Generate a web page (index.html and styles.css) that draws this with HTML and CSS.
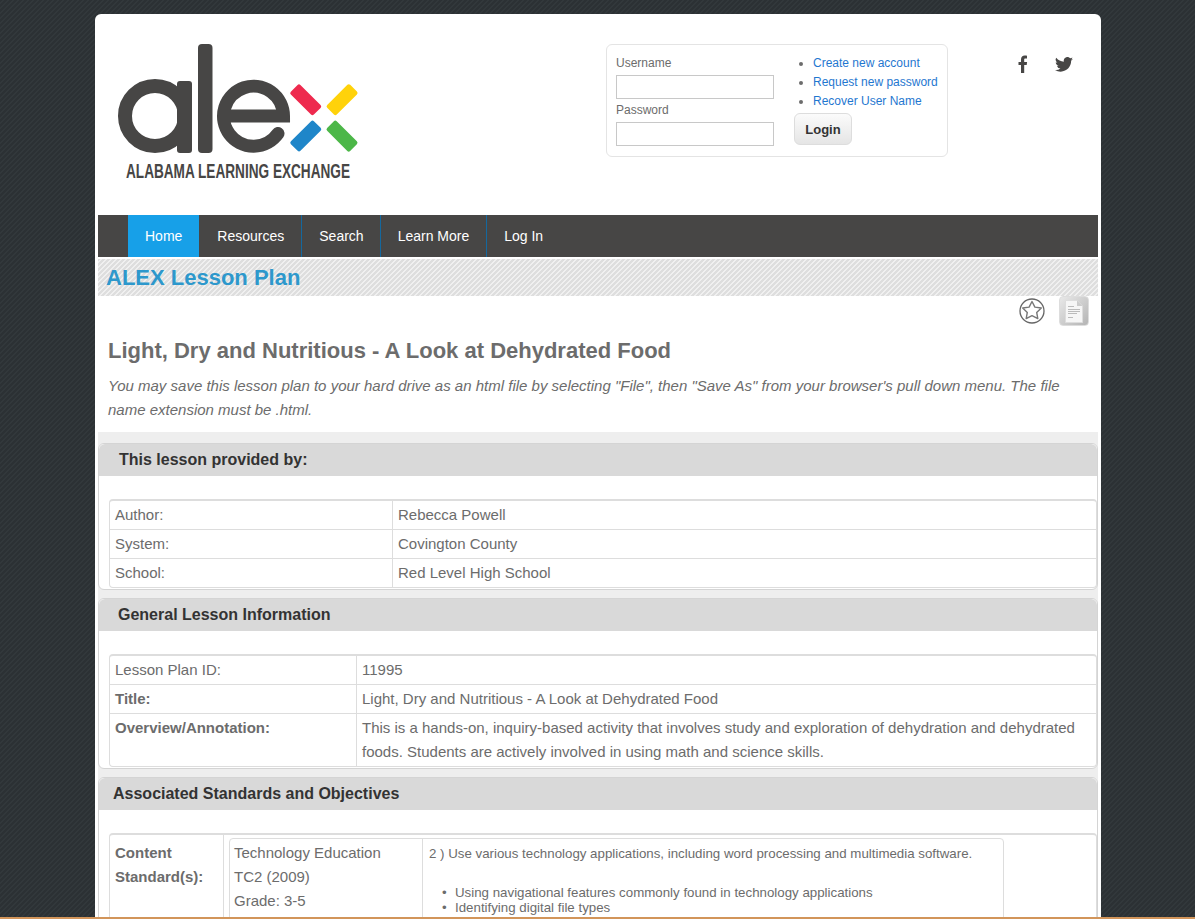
FILE: index.html
```html
<!DOCTYPE html>
<html lang="en">
<head>
    <meta charset="UTF-8">
    <title>ALEX Lesson Plan</title>
    <link rel="stylesheet" href="styles.css">
</head>
<body>
    <div class="wrapper">
        <div class="header">
            <svg class="logo" width="260" height="150" viewBox="110 40 260 150" role="img" aria-label="alex">
                <circle class="logo-ink" cx="155" cy="116" r="30" fill="none" stroke-width="14"/>
                <rect class="logo-fill" x="177" y="81" width="15" height="72" rx="3"/>
                <rect class="logo-fill" x="198" y="44" width="14.5" height="109" rx="4"/>
                <path class="logo-ink" d="M278 133.5A30 30 0 1 1 283.5 116H224" fill="none" stroke-width="13" stroke-linecap="round"/>
                <rect x="289.5" y="93" width="32.5" height="13.5" rx="2" fill="#ee2a4e" transform="rotate(45 305.7 99.7)"/>
                <rect x="325.8" y="93" width="32.5" height="13.5" rx="2" fill="#ffd20a" transform="rotate(-45 342 99.7)"/>
                <rect x="289.5" y="129.3" width="32.5" height="13.5" rx="2" fill="#1f86c9" transform="rotate(-45 305.7 136)"/>
                <rect x="325.8" y="129.3" width="32.5" height="13.5" rx="2" fill="#4cb748" transform="rotate(45 342 136)"/>
                <text class="logo-text" x="126" y="178" textLength="224" lengthAdjust="spacingAndGlyphs">ALABAMA LEARNING EXCHANGE</text>
            </svg>
            <form class="login-box">
                <div class="login-fields">
                    <label>Username</label>
                    <input type="text">
                    <label>Password</label>
                    <input type="password">
                </div>
                <div class="login-links">
                    <ul>
                        <li><a href="#">Create new account</a></li>
                        <li><a href="#">Request new password</a></li>
                        <li><a href="#">Recover User Name</a></li>
                    </ul>
                    <button type="button">Login</button>
                </div>
            </form>
            <div class="social">
                <svg width="10" height="18" viewBox="0 0 10 18"><path d="M3 18V10H.5V7H3V4.500C3 1.600 4.600.5 6.700.5c1 0 1.900.1 2.300.2v2.800H7.500C6.400 3.500 6.200 4 6.200 4.900V7h2.900l-.4 3H6.200v8z"/></svg>
                <svg width="18" height="15" viewBox="0 0 24 20"><path d="M24 2.400a9.800 9.800 0 0 1-2.800.8A5 5 0 0 0 23.300.500a9.900 9.900 0 0 1-3.100 1.200 4.900 4.900 0 0 0-8.400 4.500A14 14 0 0 1 1.700.9a4.900 4.900 0 0 0 1.500 6.600 4.900 4.900 0 0 1-2.200-.6c0 2.400 1.700 4.400 3.900 4.900a4.900 4.900 0 0 1-2.200.1 4.900 4.900 0 0 0 4.600 3.400A9.900 9.900 0 0 1 0 17.300 14 14 0 0 0 7.500 19.500c9.100 0 14.300-7.700 14-14.600A10 10 0 0 0 24 2.400z"/></svg>
            </div>
        </div>

        <ul class="nav">
            <li class="active"><a href="#">Home</a></li>
            <li><a href="#">Resources</a></li>
            <li><a href="#">Search</a></li>
            <li><a href="#">Learn More</a></li>
            <li class="last"><a href="#">Log In</a></li>
        </ul>

        <div class="page-title"><h1>ALEX Lesson Plan</h1></div>

        <div class="tools">
            <svg width="28" height="28" viewBox="0 0 28 28">
                <circle cx="14" cy="14" r="12" fill="#fff" stroke="#666" stroke-width="1.300"/>
                <path d="M14 4.500L16.900 10.100L23.300 11L18.700 15.400L19.800 21.600L14 18.700L8.200 21.600L9.300 15.400L4.700 11L11.100 10.100Z" fill="#fff" stroke="#777" stroke-width="1.400" stroke-linejoin="round"/>
            </svg>
            <div class="doc-btn">
                <svg width="18" height="23" viewBox="0 0 18 23">
                    <path d="M.5.500H12L17.500 6V22.500H.5z" fill="#f6f6f6" stroke="#ddd"/>
                    <path d="M12 .5V6H17.500z" fill="#ccc"/>
                    <path d="M3 6.500H9M3 9.500H15M3 11.500H15M3 13.500H12M3 17.500H8" stroke="#bbb" fill="none"/>
                </svg>
            </div>
        </div>

        <div class="intro">
            <h2>Light, Dry and Nutritious - A Look at Dehydrated Food</h2>
            <p>You may save this lesson plan to your hard drive as an html file by selecting "File", then "Save As" from your browser's pull down menu. The file name extension must be .html.</p>
        </div>

        <div class="panels">
            <div class="panel">
                <h3 class="panel-head head-a">This lesson provided by:</h3>
                <table class="info">
                    <tr><td class="col-a">Author:</td><td>Rebecca Powell</td></tr>
                    <tr><td>System:</td><td>Covington County</td></tr>
                    <tr><td>School:</td><td>Red Level High School</td></tr>
                </table>
            </div>

            <div class="panel">
                <h3 class="panel-head head-b">General Lesson Information</h3>
                <table class="info">
                    <tr><td class="col-b">Lesson Plan ID:</td><td>11995</td></tr>
                    <tr><td><b>Title:</b></td><td>Light, Dry and Nutritious - A Look at Dehydrated Food</td></tr>
                    <tr><td><b>Overview/Annotation:</b></td><td>This is a hands-on, inquiry-based activity that involves study and exploration of dehydration and dehydrated foods. Students are actively involved in using math and science skills.</td></tr>
                </table>
            </div>

            <div class="panel">
                <h3 class="panel-head head-c">Associated Standards and Objectives</h3>
                <table class="info">
                    <tr>
                        <td class="col-c"><b>Content Standard(s):</b></td>
                        <td class="standards-cell">
                            <table class="standards">
                                <tr>
                                    <td class="course">Technology Education<br>TC2 (2009)<br>Grade: 3-5</td>
                                    <td class="standard">
                                        <p>2 ) Use various technology applications, including word processing and multimedia software.</p>
                                        <ul>
                                            <li>Using navigational features commonly found in technology applications</li>
                                            <li>Identifying digital file types</li>
                                        </ul>
                                    </td>
                                </tr>
                            </table>
                        </td>
                    </tr>
                </table>
            </div>
        </div>
    </div>
    <div class="bottom-line"></div>
</body>
</html>
```

FILE: styles.css
```css
html, body {
    height: 100%;
    overflow: hidden;
}
body {
    margin: 0;
    font-family: "Liberation Sans", Arial, sans-serif;
    font-size: 15px;
    line-height: 24px;
    color: #6c6c6c;
    background-color: #32383b;
    background-image: linear-gradient(135deg, #2c3134 25%, transparent 25%, transparent 50%, #2c3134 50%, #2c3134 75%, transparent 75%);
    background-size: 5px 5px;
}
.wrapper {
    width: 1000px;
    margin: 14px auto 0;
    padding: 0 3px;
    background: #fff;
    border-radius: 6px 6px 0 0;
    position: relative;
    left: 0.5px;
}
.bottom-line {
    position: fixed;
    left: 0;
    right: 0;
    bottom: 0;
    height: 2px;
    background: #d2955a;
}

/* header */
.header {
    height: 201px;
    display: flex;
    align-items: flex-start;
}
.logo {
    margin: 26px 0 0 12px;
    flex: none;
    overflow: visible;
}
.logo-ink { stroke: #474645; }
.logo-fill { fill: #474645; }
.logo-text {
    font-size: 20.5px;
    font-weight: bold;
    fill: #474645;
}
.login-box {
    width: 321px;
    height: 93px;
    margin: 30px 0 0 236px;
    padding: 9px 10px 9px 9px;
    border: 1px solid #e4e4e4;
    border-radius: 6px;
    display: flex;
    flex: none;
    font-size: 12px;
    line-height: 19px;
}
.login-fields {
    width: 178px;
    flex: none;
}
.login-fields label {
    display: block;
    height: 21px;
    line-height: 18px;
}
.login-fields input {
    display: block;
    box-sizing: border-box;
    width: 158px;
    height: 24px;
    margin: 0 0 2px;
    border: 1px solid #c8c8c8;
    background: #fff;
}
.login-links ul {
    margin: 0;
    padding: 0 0 0 19px;
    white-space: nowrap;
}
.login-links a {
    color: #1f77d0;
    text-decoration: none;
}
.login-links button {
    display: block;
    width: 58px;
    height: 32px;
    margin-top: 2px;
    padding: 0;
    border: 1px solid #ddd;
    border-radius: 6px;
    background: linear-gradient(#fbfbfb, #e5e5e5);
    font-family: inherit;
    font-size: 13px;
    font-weight: bold;
    color: #333;
}
.social {
    display: flex;
    align-items: center;
    gap: 27px;
    margin: 41px 0 0 70px;
    fill: #474645;
}

/* nav */
.nav {
    list-style: none;
    margin: 0;
    padding: 0 0 0 30px;
    height: 42px;
    background: #474645;
    display: flex;
}
.nav li {
    border-right: 1px solid #14689e;
}
.nav li.active {
    background: #17a0e8;
    border-right: 0;
}
.nav li.last { border-right: 0; }
.nav a {
    display: block;
    padding: 0 17px;
    line-height: 42px;
    font-size: 14px;
    color: #fff;
    text-decoration: none;
}
.nav li:nth-child(2) a { padding-left: 18px; }
.nav li:nth-child(3) a { padding-right: 16px; }

.page-title {
    margin-top: 2px;
    height: 37px;
    background-color: #f0f0f0;
    background-image: linear-gradient(135deg, #dedede 25%, transparent 25%, transparent 50%, #dedede 50%, #dedede 75%, transparent 75%);
    background-size: 5px 5px;
}
.page-title h1 {
    margin: 0;
    padding-left: 8px;
    font-size: 22px;
    line-height: 37px;
    color: #2d98cc;
}

/* icons under the title */
.tools {
    height: 30px;
    padding-right: 9px;
    display: flex;
    justify-content: flex-end;
    align-items: center;
    gap: 13px;
}
.doc-btn {
    box-sizing: border-box;
    width: 30px;
    height: 30px;
    border: 1px solid #ddd;
    border-radius: 4px;
    background: linear-gradient(135deg, #e8e8e8, #b4b4b4);
    display: flex;
    justify-content: center;
    align-items: center;
}

.intro {
    box-sizing: border-box;
    height: 106px;
    padding: 9px 10px 10px;
}
.intro h2 {
    margin: 0 0 7px;
    font-size: 22px;
    line-height: 32px;
}
.intro p {
    margin: 0;
    font-style: italic;
}

/* panels */
.panels {
    background: #eee;
    padding-top: 11px;
    height: 600px;
}
.panel {
    background: #fff;
    border: 1px solid #d4d4d4;
    border-radius: 6px;
    margin-bottom: 8px;
    padding-bottom: 1px;
}
.panel-head {
    margin: 0 0 23px;
    height: 32px;
    background: #d9d9d9;
    border-radius: 6px 6px 0 0;
    font-size: 16px;
    line-height: 32px;
    color: #333;
}
.head-a { padding-left: 20px; }
.head-b { padding-left: 19px; }
.head-c { padding-left: 14px; }

table {
    border-collapse: separate;
    border-spacing: 0;
}
.info {
    width: 988px;
    margin-left: 10px;
    border-top: 2px solid #ddd;
    border-left: 1px solid #ddd;
    border-right: 1px solid #ddd;
    border-bottom: 1px solid #ddd;
    border-radius: 4px;
}
.info > tbody > tr > td {
    padding: 2px 5px;
    border-bottom: 1px solid #ddd;
    vertical-align: top;
}
.info > tbody > tr:last-child > td { border-bottom: 0; }
.info > tbody > tr > td:first-child { border-right: 1px solid #ddd; }
.col-a { width: 272px; }
.col-b { width: 236px; }
.col-c { width: 103px; }
.info > tbody > tr > td.col-c { padding-top: 6px; }
.info > tbody > tr > td.standards-cell { padding: 3px 5px; }
.standards {
    width: 775px;
    border: 1px solid #ddd;
    border-radius: 4px;
}
.course {
    width: 183px;
    padding: 2px 5px 10px 4px;
    border-right: 1px solid #ddd;
    vertical-align: top;
}
.standard {
    padding: 7px 5px 0 6px;
    font-size: 13.3px;
    line-height: 15px;
    vertical-align: top;
}
.standard p { margin: 0 0 24px; }
.standard ul {
    margin: 0;
    padding: 0 0 0 26px;
    list-style: none;
}
.standard li { position: relative; }
.standard li::before {
    content: "\2022";
    position: absolute;
    left: -13px;
}
```
